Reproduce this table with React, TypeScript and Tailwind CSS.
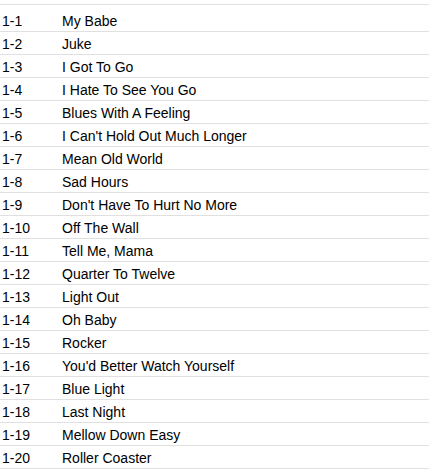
const tracks = [
  "My Babe",
  "Juke",
  "I Got To Go",
  "I Hate To See You Go",
  "Blues With A Feeling",
  "I Can't Hold Out Much Longer",
  "Mean Old World",
  "Sad Hours",
  "Don't Have To Hurt No More",
  "Off The Wall",
  "Tell Me, Mama",
  "Quarter To Twelve",
  "Light Out",
  "Oh Baby",
  "Rocker",
  "You'd Better Watch Yourself",
  "Blue Light",
  "Last Night",
  "Mellow Down Easy",
  "Roller Coaster",
];

export default function App() {
  return (
    <div className="w-[429px] h-[471px] bg-white pt-1 text-[14px] text-black [font-family:'Liberation_Sans',Arial,sans-serif]">
      <div className="border-t border-[#e0e0e0] pt-1">
        {tracks.map((title, i) => (
          <div key={title} className="flex h-[23px] items-center border-b border-[#e0e0e0] pt-[2px]">
            <span className="w-[62px] pl-[2px]">1-{i + 1}</span>
            <span>{title}</span>
          </div>
        ))}
      </div>
    </div>
  );
}
